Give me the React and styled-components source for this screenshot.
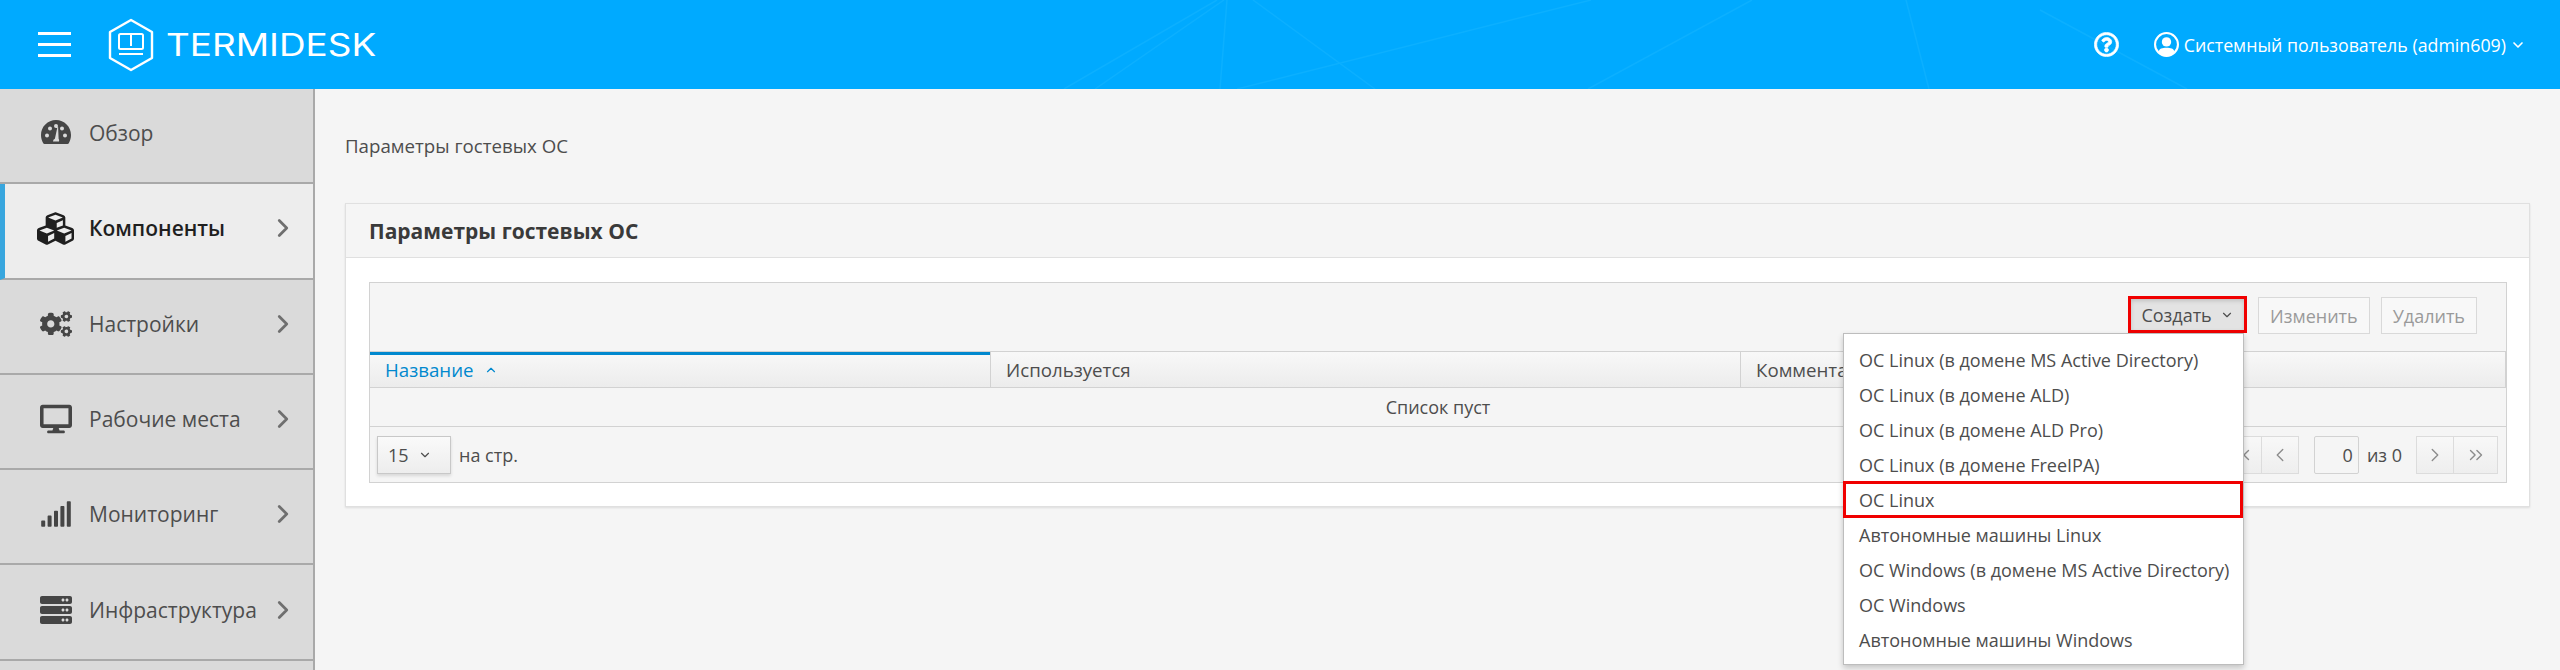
import styled, { createGlobalStyle } from 'styled-components';
import { ChevronDown, ChevronLeft, ChevronRight, ChevronUp, ChevronsLeft, ChevronsRight } from 'lucide-react';
import { FaCogs, FaCubes, FaDesktop, FaRegQuestionCircle, FaServer, FaSignal } from 'react-icons/fa';

const Global = createGlobalStyle`
	html, body {
		margin: 0;
		height: 100%;
		overflow: hidden;
		background: #f5f5f5;
		font-family: 'Open Sans', 'Noto Sans', sans-serif;
		font-size: 18px;
		color: #4d4d4d;
	}
	* {
		box-sizing: border-box;
	}
`;

// dashboard gauge, the icon sets here only have a newer outline of it
const GaugeIcon = ({ size }) => (
	<svg width={size} height={size} viewBox="0 0 32 32" fill="currentColor">
		<path
			fillRule="evenodd"
			d="M16 3C7.7 3 1 9.7 1 18c0 3 .8 5.700 2.200 8.200.3.500.8.800 1.300.800h23c.5 0 1-.3 1.300-.8C30.200 23.700 31 21 31 18 31 9.700 24.300 3 16 3zM7 20.500a2 2 0 1 1 0-4 2 2 0 0 1 0 4zm3-7a2 2 0 1 1 0-4 2 2 0 0 1 0 4zm6-2.500a2 2 0 1 1 0-4 2 2 0 0 1 0 4zm6 2.500a2 2 0 1 1 0-4 2 2 0 0 1 0 4zm3 7a2 2 0 1 1 0-4 2 2 0 0 1 0 4zM19 24.500h-6a3 3 0 0 1 1.900-2.800L17.500 9.800h.6l.5 11.900A3 3 0 0 1 19 24.500z"
		/>
	</svg>
);

const menu = [
	{ title: 'Обзор', icon: GaugeIcon },
	{ title: 'Компоненты', icon: FaCubes, active: true, arrow: true },
	{ title: 'Настройки', icon: FaCogs, arrow: true },
	{ title: 'Рабочие места', icon: FaDesktop, arrow: true },
	{ title: 'Мониторинг', icon: FaSignal, arrow: true },
	{ title: 'Инфраструктура', icon: FaServer, arrow: true },
];

const createItems = [
	'ОС Linux (в домене MS Active Directory)',
	'ОС Linux (в домене ALD)',
	'ОС Linux (в домене ALD Pro)',
	'ОС Linux (в домене FreeIPA)',
	'ОС Linux',
	'Автономные машины Linux',
	'ОС Windows (в домене MS Active Directory)',
	'ОС Windows',
	'Автономные машины Windows',
];

const headerLines = [
	[1217, 0, 1064, 89],
	[1224, 0, 1095, 89],
	[1227, 0, 1220, 89],
	[1253, 0, 1375, 89],
	[1591, 0, 1237, 89],
	[1752, 0, 1588, 89],
	[1906, 0, 1929, 89],
	[2040, 10, 2187, 89],
];

const App = () => {
	return (
		<Shell>
			<Global />
			<TopBar>
				<Lines viewBox="0 0 2560 89">
					{headerLines.map((l, i) => (
						<line key={i} x1={l[0]} y1={l[1]} x2={l[2]} y2={l[3]} />
					))}
				</Lines>
				<Burger>
					<span />
					<span />
					<span />
				</Burger>
				<LogoMark viewBox="0 0 48 54">
					<path
						d="M24 2 L45 14 V40 L24 52 L3 40 V14 Z"
						fill="none"
						stroke="#fff"
						strokeWidth="2.4"
						strokeLinejoin="round"
					/>
					<rect x="12" y="16" width="24" height="15" rx="1.5" fill="none" stroke="#fff" strokeWidth="2" />
					<line x1="24" y1="16" x2="24" y2="28" stroke="#fff" strokeWidth="2" />
					<line x1="12" y1="36" x2="36" y2="36" stroke="#fff" strokeWidth="2" />
				</LogoMark>
				<LogoText>TERMIDESK</LogoText>
				<TopRight>
					<HelpIcon />
					<UserIcon viewBox="0 0 24 24">
						<circle cx="12" cy="12" r="11" fill="none" stroke="#fff" strokeWidth="2" />
						<circle cx="12" cy="9.5" r="4.5" fill="#fff" />
						<path d="M4 19.5 C5 15.5 8 15 12 15 C16 15 19 15.5 20 19.5 C18 21.8 15 23 12 23 C9 23 6 21.8 4 19.5 Z" fill="#fff" />
					</UserIcon>
					<UserName>Системный пользователь (admin609)</UserName>
					<ChevronDown size={16} strokeWidth={2.5} />
				</TopRight>
			</TopBar>
			<Main>
				<Sidebar>
					{menu.map((item) => {
						const Icon = item.icon;
						return (
							<MenuItem key={item.title} $active={item.active}>
								<MenuIcon $active={item.active}>
									<Icon size={item.active ? 37 : 32} />
								</MenuIcon>
								<MenuTitle $active={item.active}>{item.title}</MenuTitle>
								{item.arrow && (
									<MenuArrow>
										<ChevronRight size={30} strokeWidth={2.2} />
									</MenuArrow>
								)}
							</MenuItem>
						);
					})}
				</Sidebar>
				<Content>
					<Breadcrumb>Параметры гостевых ОС</Breadcrumb>
					<Panel>
						<PanelHead>Параметры гостевых ОС</PanelHead>
						<PanelBody>
							<Table>
								<Toolbar>
									<CreateWrap>
										<CreateButton>
											Создать
											<ChevronDown size={14} />
										</CreateButton>
										<Dropdown>
											{createItems.map((text) => (
												<DropItem key={text} $marked={text === 'ОС Linux'}>
													{text}
												</DropItem>
											))}
										</Dropdown>
									</CreateWrap>
									<ToolButton>Изменить</ToolButton>
									<ToolButton>Удалить</ToolButton>
								</Toolbar>
								<HeadRow>
									<HeadCell $sorted>
										Название
										<ChevronUp size={14} />
									</HeadCell>
									<HeadCell>Используется</HeadCell>
									<HeadCell>Комментарий</HeadCell>
								</HeadRow>
								<EmptyRow>Список пуст</EmptyRow>
								<Footer>
									<PageSize>
										15
										<ChevronDown size={14} />
									</PageSize>
									<FooterText>на стр.</FooterText>
									<Pager>
										<PageGroup>
											<PageButton>
												<ChevronsLeft size={22} strokeWidth={1.5} />
											</PageButton>
											<PageButton>
												<ChevronLeft size={22} strokeWidth={1.5} />
											</PageButton>
										</PageGroup>
										<PageInput>0</PageInput>
										<FooterText>из 0</FooterText>
										<PageGroup>
											<PageButton>
												<ChevronRight size={22} strokeWidth={1.5} />
											</PageButton>
											<PageButton $wide>
												<ChevronsRight size={22} strokeWidth={1.5} />
											</PageButton>
										</PageGroup>
									</Pager>
								</Footer>
							</Table>
						</PanelBody>
					</Panel>
				</Content>
			</Main>
		</Shell>
	);
};

const Shell = styled.div`
	height: 670px;
	display: flex;
	flex-direction: column;
	overflow: hidden;
`;

const TopBar = styled.header`
	position: relative;
	flex: 0 0 89px;
	display: flex;
	align-items: center;
	background: #00aaff;
	color: #fff;
	padding-left: 38px;
`;

const Lines = styled.svg`
	position: absolute;
	inset: 0;
	width: 100%;
	height: 100%;

	line {
		stroke: #0cb0ff;
		stroke-width: 1.5;
	}
`;

const Burger = styled.div`
	position: relative;
	width: 33px;
	display: flex;
	flex-direction: column;
	gap: 8px;
	margin-right: 36px;

	span {
		display: block;
		height: 3px;
		background: #fff;
	}
`;

const LogoMark = styled.svg`
	position: relative;
	width: 48px;
	height: 54px;
	margin-right: 11px;
`;

const LogoText = styled.div`
	position: relative;
	font-family: 'Inter', sans-serif;
	font-size: 31px;
	font-weight: 400;
	line-height: 1;
	transform: scaleX(1.19);
	transform-origin: left center;
`;

const TopRight = styled.div`
	position: relative;
	margin-left: auto;
	margin-right: 34px;
	display: flex;
	align-items: center;
`;

const HelpIcon = styled(FaRegQuestionCircle)`
	width: 25px;
	height: 25px;
	margin-right: 35px;
	stroke: currentColor;
	stroke-width: 14;
`;

const UserIcon = styled.svg`
	width: 25px;
	height: 25px;
	margin-right: 5px;
`;

const UserName = styled.span`
	margin-right: 4px;
	font-size: 17.8px;
`;

const Main = styled.div`
	flex: 1;
	display: flex;
	min-height: 0;
`;

const Sidebar = styled.nav`
	flex: 0 0 315px;
	border-right: 2px solid #a9a9a9;
	background: #dadada;
	overflow: hidden;
`;

const MenuItem = styled.div`
	height: 95.3px;
	display: flex;
	align-items: center;
	padding-left: ${(p) => (p.$active ? '32px' : '40px')};
	padding-bottom: 5px;
	border-bottom: 2px solid #a9a9a9;
	border-left: ${(p) => (p.$active ? '5px solid #38a6de' : 'none')};
	background: ${(p) => (p.$active ? '#ededed' : '#dadada')};
`;

const MenuIcon = styled.span`
	width: ${(p) => (p.$active ? '52px' : '49px')};
	flex: none;
	display: flex;
	color: ${(p) => (p.$active ? '#1f1f1f' : '#454545')};
`;

const MenuTitle = styled.span`
	font-size: 21px;
	font-weight: ${(p) => (p.$active ? 600 : 400)};
	color: ${(p) => (p.$active ? '#1f1f1f' : '#4d4d4d')};
`;

const MenuArrow = styled.span`
	margin-left: auto;
	margin-right: 15px;
	display: flex;
	color: #6f6f6f;
`;

const Content = styled.main`
	flex: 1;
	padding: 0 30px;
	min-width: 0;
`;

const Breadcrumb = styled.div`
	height: 114px;
	padding-top: 45px;
	font-size: 18.7px;
	line-height: 24px;
	color: #4d4d4d;
`;

const Panel = styled.section`
	border: 1px solid #e0e0e0;
	background: #fff;
	box-shadow: 0 1px 2px rgba(0, 0, 0, 0.1);
`;

const PanelHead = styled.h2`
	margin: 0;
	height: 54px;
	padding-left: 23px;
	display: flex;
	align-items: center;
	background: #f5f5f5;
	border-bottom: 1px solid #e0e0e0;
	font-size: 21px;
	font-weight: 700;
	color: #3a3a3a;
`;

const PanelBody = styled.div`
	padding: 24px 22px 23px 23px;
`;

const Table = styled.div`
	border: 1px solid #d2d2d2;
	background: #f5f5f5;
`;

const Toolbar = styled.div`
	height: 68px;
	display: flex;
	align-items: flex-start;
	justify-content: flex-end;
	gap: 11px;
	padding: 13px 29px 0 0;
`;

const CreateWrap = styled.div`
	position: relative;
`;

const CreateButton = styled.div`
	height: 37px;
	width: 119px;
	border: 3px solid #f00000;
	background: #e3e3e3;
	box-shadow: inset 0 2px 4px rgba(0, 0, 0, 0.15);
	display: flex;
	align-items: center;
	justify-content: center;
	gap: 8px;
	color: #4d4d4d;
`;

const ToolButton = styled.div`
	height: 37px;
	margin-top: 1px;
	padding: 0 11px;
	display: flex;
	align-items: center;
	background: #f8f8f8;
	border: 1px solid #d9d9d9;
	color: #9a9a9a;
`;

const Dropdown = styled.div`
	position: absolute;
	top: 100%;
	right: 3px;
	width: 401px;
	padding: 8px 0 7px;
	background: #fff;
	border: 1px solid #bdbdbd;
	box-shadow: 0 3px 6px rgba(0, 0, 0, 0.2);
	z-index: 5;
`;

const DropItem = styled.div`
	height: ${(p) => (p.$marked ? '37px' : '35px')};
	margin: ${(p) => (p.$marked ? '-1px 0 -1px -1px' : '0')};
	padding-left: ${(p) => (p.$marked ? '13px' : '15px')};
	display: flex;
	align-items: center;
	border: ${(p) => (p.$marked ? '3px solid #f00000' : 'none')};
	white-space: nowrap;
	color: #4d4d4d;
`;

const HeadRow = styled.div`
	display: grid;
	grid-template-columns: 621px 750px 1fr;
	height: 37px;
	border-top: 1px solid #d2d2d2;
	border-bottom: 1px solid #d2d2d2;
	background: linear-gradient(#f8f8f8, #ececec);
`;

const HeadCell = styled.div`
	display: flex;
	align-items: center;
	gap: 10px;
	padding-left: 15px;
	border-right: 1px solid #d2d2d2;
	font-size: 18.7px;
	color: ${(p) => (p.$sorted ? '#0088ce' : '#4d4d4d')};
	box-shadow: ${(p) => (p.$sorted ? 'inset 0 3px 0 #0088ce' : 'none')};
`;

const EmptyRow = styled.div`
	height: 39px;
	display: flex;
	align-items: center;
	justify-content: center;
	border-bottom: 1px solid #d2d2d2;
`;

const Footer = styled.div`
	height: 55px;
	display: flex;
	align-items: center;
	padding: 0 8px 0 7px;
`;

const PageSize = styled.div`
	width: 74px;
	height: 38px;
	padding-left: 10px;
	display: flex;
	align-items: center;
	gap: 9px;
	border: 1px solid #c8c8c8;
	background: linear-gradient(#fafafa, #ededed);
	box-shadow: 0 2px 3px rgba(0, 0, 0, 0.12);
`;

const FooterText = styled.span`
	margin-left: 8px;
`;

const Pager = styled.div`
	margin-left: auto;
	display: flex;
	align-items: center;
`;

const PageGroup = styled.div`
	display: flex;
	margin-left: 15px;
`;

const PageButton = styled.div`
	width: ${(p) => (p.$wide ? '45px' : '38px')};
	height: 38px;
	display: flex;
	align-items: center;
	justify-content: center;
	border: 1px solid #dcdcdc;
	margin-left: -1px;
	background: linear-gradient(#f8f8f8, #eeeeee);
	color: #8c8c8c;
`;

const PageInput = styled.div`
	width: 45px;
	height: 38px;
	margin-left: 15px;
	padding-right: 5px;
	display: flex;
	align-items: center;
	justify-content: flex-end;
	border: 1px solid #d2d2d2;
	border-radius: 2px;
`;

export default App;
